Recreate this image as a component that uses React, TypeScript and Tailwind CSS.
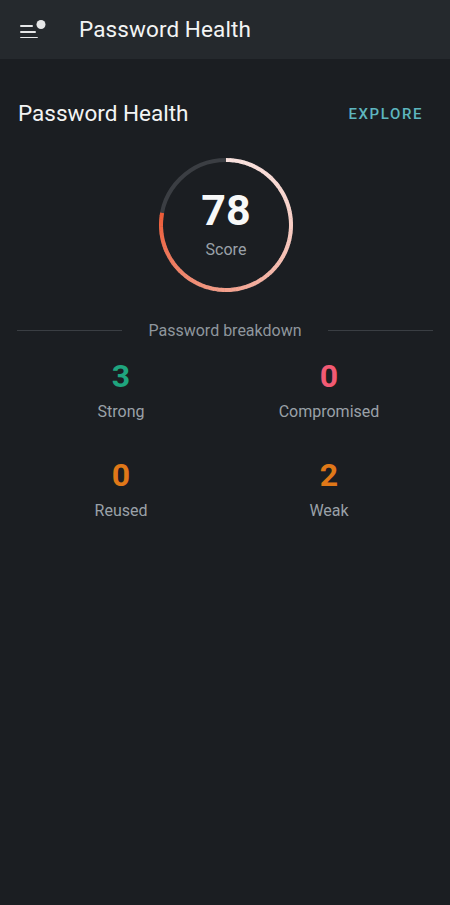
import React from "react";

const SCORE = 78;

const stats = [
  { value: 3, label: "Strong", color: "text-[#1fa57e]" },
  { value: 0, label: "Compromised", color: "text-[#f25a73]" },
  { value: 0, label: "Reused", color: "text-[#e07818]" },
  { value: 2, label: "Weak", color: "text-[#e07818]" },
];

// light pink at the start of the arc, orange-red at the end
const START: [number, number, number] = [250, 226, 222];
const END: [number, number, number] = [236, 92, 56];

function mix(t: number) {
  const c = START.map((s, i) => Math.round(s + (END[i] - s) * t));
  return `rgb(${c[0]},${c[1]},${c[2]})`;
}

function point(cx: number, cy: number, r: number, deg: number) {
  const a = ((deg - 90) * Math.PI) / 180;
  return [cx + r * Math.cos(a), cy + r * Math.sin(a)];
}

function ScoreRing({ score }: { score: number }) {
  const size = 136;
  const c = size / 2;
  const r = 65;
  const total = (score / 100) * 360;
  const steps = 90;
  const segs = [];
  for (let i = 0; i < steps; i++) {
    const a0 = (total * i) / steps;
    const a1 = (total * (i + 1)) / steps + (i < steps - 1 ? 0.4 : 0);
    const [x0, y0] = point(c, c, r, a0);
    const [x1, y1] = point(c, c, r, a1);
    const t = i / (steps - 1);
    const eased = Math.pow(t, 1.6);
    segs.push(
      <path
        key={i}
        d={`M ${x0} ${y0} A ${r} ${r} 0 0 1 ${x1} ${y1}`}
        stroke={mix(eased)}
        strokeWidth={4}
        fill="none"
      />
    );
  }
  return (
    <div className="relative w-[136px] h-[136px]">
      <svg width={size} height={size} viewBox={`0 0 ${size} ${size}`}>
        <circle cx={c} cy={c} r={r} stroke="#3b3e43" strokeWidth={4} fill="none" />
        {segs}
      </svg>
      <div className="absolute inset-0 flex flex-col items-center justify-center">
        <span className="text-[43px] leading-none font-bold text-[#f7f8f8] mt-[2px]">{score}</span>
        <span className="text-[16px] text-[#9aa1a8] mt-[6px]">Score</span>
      </div>
    </div>
  );
}

function MenuIcon() {
  return (
    <svg width="28" height="22" viewBox="0 0 28 22">
      <rect x="0" y="9" width="13" height="2" rx="1" fill="#e6e7e8" />
      <rect x="0" y="15" width="16" height="2" rx="1" fill="#e6e7e8" />
      <rect x="0" y="21" width="18" height="1.8" rx="0.9" fill="#e6e7e8" />
      <circle cx="21" cy="8.5" r="4.5" fill="#e6e7e8" />
    </svg>
  );
}

export default function App() {
  return (
    <div className="w-[450px] min-h-[905px] bg-[#1b1e22] font-['Roboto',sans-serif]">
      <header className="h-[59px] bg-[#25292d] flex items-center px-[20px]">
        <div className="mt-[-6px]">
          <MenuIcon />
        </div>
        <h1 className="ml-[31px] text-[22.5px] text-[#f3f4f4] tracking-[0.1px]">Password Health</h1>
      </header>

      <main className="px-[17px]">
        <div className="flex items-center justify-between pt-[38px]">
          <h2 className="text-[22.5px] text-[#f3f4f4] ml-[1px]">Password Health</h2>
          <button className="text-[15px] font-medium tracking-[1.6px] text-[#5db6bf] mr-[10px]">EXPLORE</button>
        </div>

        <div className="flex justify-center mt-[26px] ml-[2px]">
          <ScoreRing score={SCORE} />
        </div>

        <div className="flex items-center mt-[26px]">
          <div className="flex-1 h-px bg-[#3a3e43]" />
          <span className="px-[26px] text-[16px] text-[#8f969d]">Password breakdown</span>
          <div className="flex-1 h-px bg-[#3a3e43]" />
        </div>

        <div className="grid grid-cols-2 mt-[13px] gap-y-[31px]">
          {stats.map((s) => (
            <div key={s.label} className="flex flex-col items-center">
              <span className={`text-[32px] font-bold leading-[40px] ${s.color}`}>{s.value}</span>
              <span className="text-[16px] text-[#9aa1a8] mt-[4px]">{s.label}</span>
            </div>
          ))}
        </div>
      </main>
    </div>
  );
}
